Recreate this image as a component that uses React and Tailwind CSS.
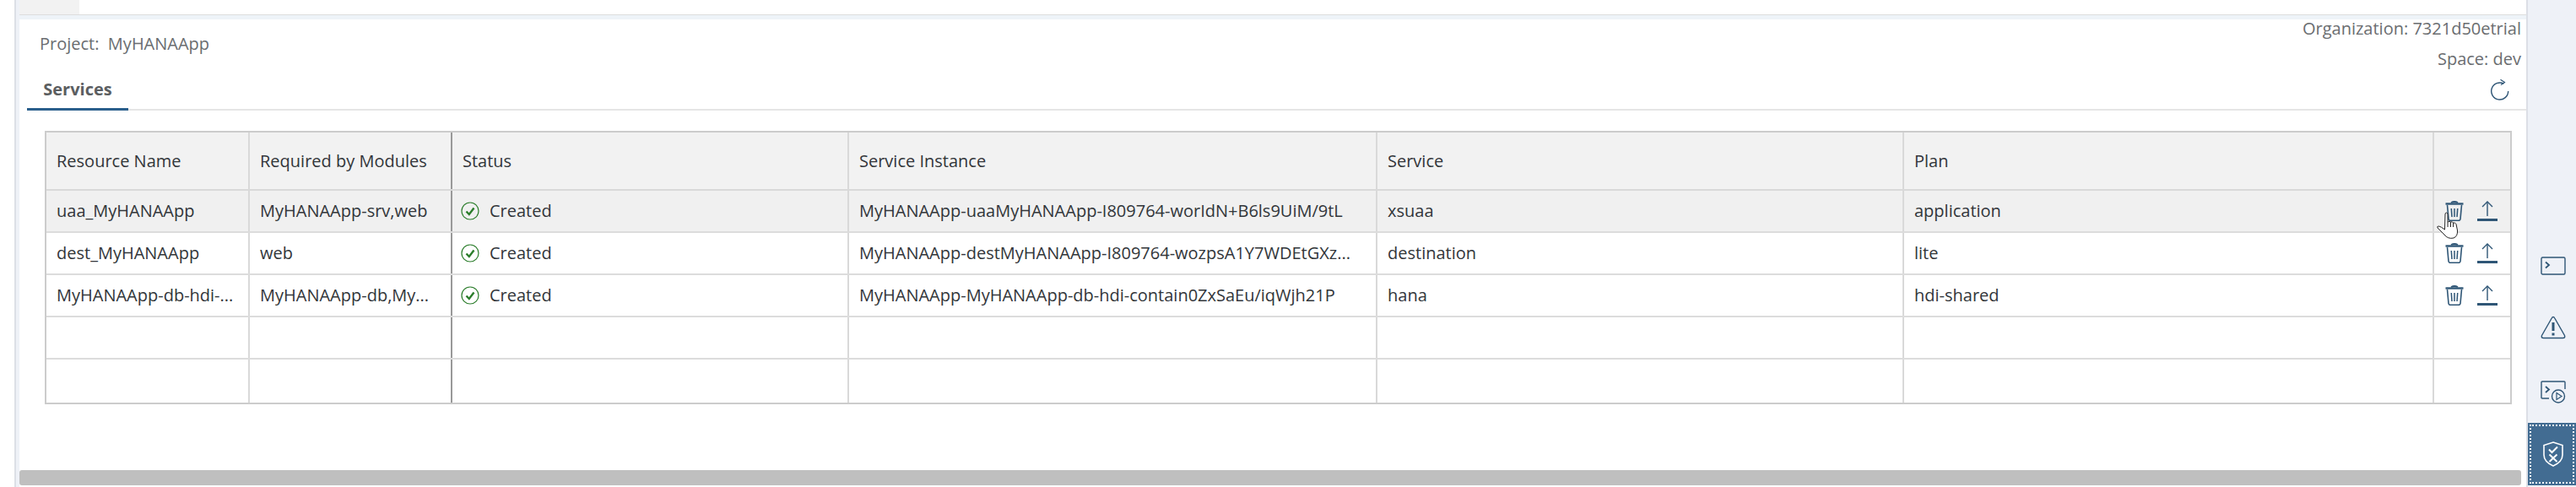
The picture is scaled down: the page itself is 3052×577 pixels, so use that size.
import React from "react";

const COLS = "grid grid-cols-[241px_240px_470px_626px_624px_628px_90px]";
const FONT = "font-['Open_Sans',sans-serif]";

const rows = [
  ["uaa_MyHANAApp", "MyHANAApp-srv,web", "MyHANAApp-uaaMyHANAApp-I809764-worIdN+B6ls9UiM/9tL", "xsuaa", "application"],
  ["dest_MyHANAApp", "web", "MyHANAApp-destMyHANAApp-I809764-wozpsA1Y7WDEtGXz...", "destination", "lite"],
  ["MyHANAApp-db-hdi-...", "MyHANAApp-db,My...", "MyHANAApp-MyHANAApp-db-hdi-contain0ZxSaEu/iqWjh21P", "hana", "hdi-shared"],
];

const CheckIcon = () => (
  <svg className="-ml-[2px]" width="22" height="22" viewBox="0 0 22 22" fill="none">
    <circle cx="11" cy="11" r="10" stroke="#2b7d2b" strokeWidth="1.2" />
    <path d="M6.5 11.5 L9.8 15 L15.5 7.5" stroke="#2b7d2b" strokeWidth="2.4" />
  </svg>
);

const RefreshIcon = () => (
  <svg width="22" height="25" viewBox="0 0 22 25" fill="none" stroke="#2f5676" strokeWidth="1.4">
    <path d="M15.5 5.2 A10 10 0 1 0 20.7 14" />
    <path d="M10.5 1 L15.5 5 L11 9" transform="translate(1 -.5) scale(1 .8)" />
  </svg>
);

const TrashIcon = () => (
  <svg width="22" height="24" viewBox="0 0 22 24" fill="none" stroke="#2f5676">
    <path d="M0.5 3.5 H21.5" strokeWidth="2.4" />
    <path d="M7 2 Q11 0 15 2" strokeWidth="1.8" />
    <path d="M2.5 5 L4 21.5 Q4.2 23.3 6 23.3 H16 Q17.8 23.3 18 21.5 L19.5 5" strokeWidth="1.6" />
    <path d="M7.3 9 L8 19 M11 9 V19 M14.7 9 L14 19" strokeWidth="1.5" />
  </svg>
);

const UploadIcon = () => (
  <svg width="24" height="24" viewBox="0 0 24 24" fill="none" stroke="#2f5676">
    <path d="M12 1 V18" strokeWidth="1.4" />
    <path d="M6 7 L12 1 L18 7" strokeWidth="1.4" />
    <path d="M0 22.5 H24" strokeWidth="3" />
  </svg>
);

const HandCursor = () => (
  <svg className="absolute -left-[10px] top-[13px]" width="26" height="32" viewBox="0 0 26 32" fill="#fff" stroke="#222" strokeWidth="1">
    <path d="M10 3 Q10 1 11.5 1 Q13 1 13 3 V12 Q15 10.5 16.5 12 Q18.5 11 19.5 13 Q22 12.500 23 14.500 L24.500 22 Q25 29 20 31 Q13 32.500 9 27 L1 19 Q0 17 2.500 17 Q5 17.500 9.500 21 Z" />
    <path d="M13 12 V18 M16.500 12 V18 M19.500 13 V18" fill="none" />
  </svg>
);

const TerminalIcon = () => (
  <svg className="mb-[2px]" width="30" height="24" viewBox="0 0 30 24" fill="none" stroke="#2f5676" strokeWidth="1.4">
    <rect x="1" y="2" width="28" height="20" rx="1.500" />
    <path d="M6 7.500 L10 11 L6 14.500" strokeWidth="1.800" />
  </svg>
);

const WarningIcon = () => (
  <svg className="mb-[5px]" width="30" height="28" viewBox="0 0 30 28" fill="none" stroke="#2f5676" strokeWidth="1.4">
    <path d="M15 1.500 Q16 1.500 16.800 3 L28.500 23.500 Q29.500 26.500 26.500 26.500 H3.500 Q.5 26.500 1.500 23.500 L13.200 3 Q14 1.500 15 1.500 Z" />
    <path d="M15 8 V18" strokeWidth="3" />
    <path d="M15 20.500 V23.500" strokeWidth="3" />
  </svg>
);

const TerminalPlayIcon = () => (
  <svg width="30" height="27" viewBox="0 0 30 27" fill="none" stroke="#2f5676" strokeWidth="1.4">
    <path d="M10 21 H2 Q1 21 1 20 V2 Q1 1 2 1 H28 Q29 1 29 2 V10" />
    <path d="M6 7 L10 10.500 L6 14" strokeWidth="1.800" />
    <circle cx="21" cy="18.500" r="7.500" />
    <path d="M19 14.500 L25 18.500 L19 22.500 Z" strokeWidth="1.200" />
  </svg>
);

const ShieldIcon = () => (
  <svg width="24" height="30" viewBox="0 0 24 30" fill="none" stroke="#fff">
    <path d="M12 1 L23 4.500 V16 Q23 24 12 29 Q1 24 1 16 V4.500 Z" strokeWidth="1.600" />
    <path d="M7 9.500 L10.500 13 L17 6.500" strokeWidth="2" />
    <path d="M7.500 15.500 L16.500 24 M16.500 15.500 L7.500 24" strokeWidth="2" />
  </svg>
);

const Cell = ({ children, strong }) => (
  <div
    className={`flex items-center gap-[12px] overflow-hidden whitespace-nowrap border-r-2 pl-3 ${
      strong ? "border-r-[#999999]" : "border-r-[#d9d9d9]"
    }`}
  >
    {children}
  </div>
);

const Row = ({ data, hovered, cursor, isLast }) => {
  const height = isLast ? "h-[51px]" : "h-[50px] border-b-2 border-[#dcdcdc]";
  const bg = hovered ? "bg-[#f0f0f0]" : "bg-white";
  return (
    <div className={`${COLS} ${height} ${bg}`}>
      <Cell>{data?.[0]}</Cell>
      <Cell strong>{data?.[1]}</Cell>
      <Cell>
        {data && <CheckIcon />}
        {data && <span>Created</span>}
      </Cell>
      <Cell>{data?.[2]}</Cell>
      <Cell>{data?.[3]}</Cell>
      <Cell>{data?.[4]}</Cell>
      <div className="flex items-center pl-[13px]">
        {data && (
          <div className="relative flex items-center gap-[16px]">
            <TrashIcon />
            <UploadIcon />
            {cursor && <HandCursor />}
          </div>
        )}
      </div>
    </div>
  );
};

const SideButton = ({ children, active }) => (
  <button className={`flex h-[74px] w-full items-center justify-center pl-[2px] ${active ? "bg-[#426c92] outline-2 outline-dotted -outline-offset-4 outline-white" : ""}`}>
    {children}
  </button>
);

export default function App() {
  return (
    <div className={`flex h-[577px] w-[3052px] overflow-hidden bg-white text-[20px] text-[#32363a] ${FONT}`}>
      {/* left gutter */}
      <div className="w-[17px] shrink-0 bg-white" />
      <div className="w-[6px] shrink-0 border-l-2 border-[#dcdfe6] bg-[#eef1f7]" />

      <div className="flex min-w-0 flex-1 flex-col">
        {/* editor tabs */}
        <div className="h-[18px] shrink-0 border-b border-[#dddddd] bg-white">
          <div className="h-[17px] w-[71px] bg-[#f2f2f2]" />
        </div>
        <div className="h-[5px] shrink-0 bg-[#eef3f8]" />

        {/* project info */}
        <div className="flex h-[65px] shrink-0 justify-between pl-[24px] pr-[6px] text-[#6a6d70]">
          <div className="pt-[18px] leading-[22px]">Project:&nbsp; MyHANAApp</div>
          <div className="flex flex-col items-end gap-[14px] leading-[22px]">
            <div>Organization: 7321d50etrial</div>
            <div>Space: dev</div>
          </div>
        </div>

        {/* tab bar */}
        <div className="ml-[9px] flex h-[43px] shrink-0 items-end justify-between border-b-2 border-[#e5e5e5]">
          <div className="-mb-[2px] flex h-[43px] w-[120px] items-center justify-center border-b-[3px] border-[#2b5f8c] pb-[4px] font-bold text-[#5b5e61]">
            Services
          </div>
          <div className="mb-[10px] mr-[20px]">
            <RefreshIcon />
          </div>
        </div>

        {/* services table */}
        <div className="ml-[30px] mt-[24px] w-[2923px] shrink-0 border-2 border-[#cccccc]">
          <div className={`${COLS} h-[69px] border-b-2 border-[#d9d9d9] bg-[#f2f2f2]`}>
            <Cell>Resource Name</Cell>
            <Cell strong>Required by Modules</Cell>
            <Cell>Status</Cell>
            <Cell>Service Instance</Cell>
            <Cell>Service</Cell>
            <Cell>Plan</Cell>
            <div />
          </div>
          <Row data={rows[0]} hovered cursor />
          <Row data={rows[1]} />
          <Row data={rows[2]} />
          <Row />
          <Row isLast />
        </div>

        {/* horizontal scrollbar */}
        <div className="mb-[2px] mr-[6px] mt-auto h-[18px] shrink-0 rounded-[3px] bg-[#bfbfbf]" />
      </div>

      {/* right rail */}
      <div className="flex w-[59px] shrink-0 flex-col justify-end border-l-2 border-[#dcdfe6] bg-[#eef1f7] pb-[2px]">
        <SideButton><TerminalIcon /></SideButton>
        <SideButton><WarningIcon /></SideButton>
        <SideButton><TerminalPlayIcon /></SideButton>
        <SideButton active><ShieldIcon /></SideButton>
      </div>
    </div>
  );
}
